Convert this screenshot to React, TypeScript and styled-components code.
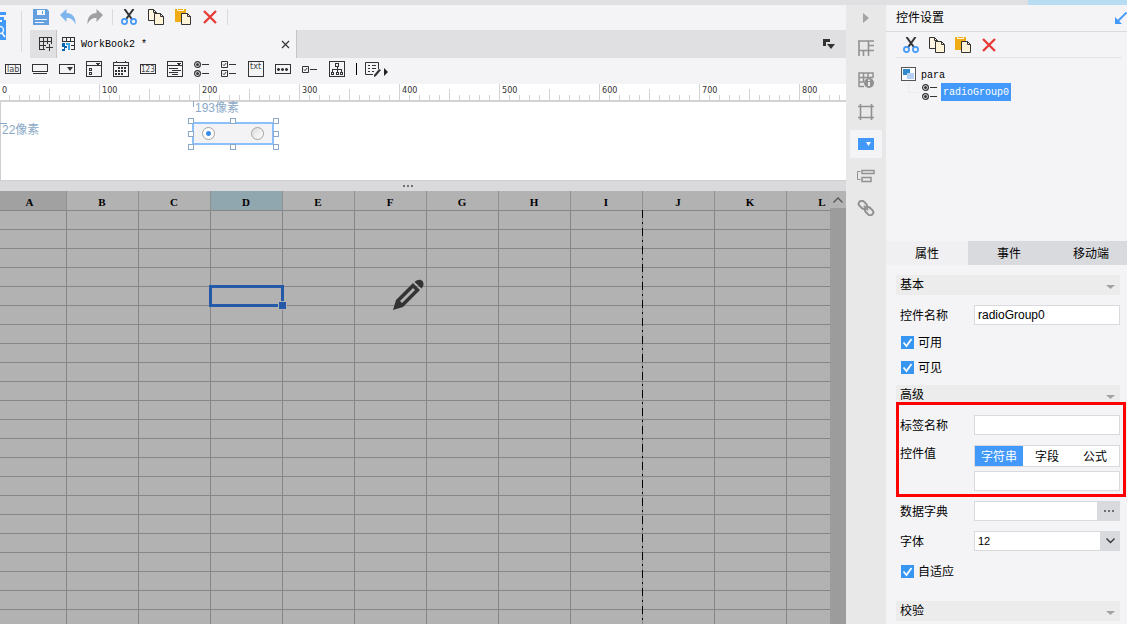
import React from "react";
import styled, { createGlobalStyle, css } from "styled-components";

const c = {
  bg: "#f4f4f7",
  bar: "#e0e0e2",
  rail: "#e8e8e8",
  line: "#d9dadd",
  blue: "#4299f9",
  ink: "#333333",
  mute: "#919191",
  guide: "#8aa9c6",
  cell: "#b2b2b2",
  cellLine: "#868686",
};

const GlobalStyle = createGlobalStyle`
  * { box-sizing: border-box; }
  body {
    margin: 0;
    background: ${c.bg};
    color: #000;
    font-family: "Liberation Sans", "Noto Sans CJK SC", sans-serif;
    font-size: 12px;
    line-height: 14px;
  }
  button, input, select { font: inherit; color: inherit; margin: 0; }
  button { border: 0; padding: 0; background: none; cursor: pointer; }
  svg { display: block; flex: none; }
`;

const Shell = styled.div`
  display: flex;
  flex-direction: column;
  height: 100vh;
  overflow: hidden;
`;

const TopStrip = styled.div`
  display: flex;
  justify-content: flex-end;
  flex: none;
  height: 5px;
  background: ${c.bar};
`;

const TopAccent = styled.div`
  width: 99px;
  background: #b8dcf2;
`;

const Columns = styled.div`
  display: flex;
  flex: 1;
  min-height: 0;
`;

const Designer = styled.main`
  display: flex;
  flex-direction: column;
  flex: 1;
  min-width: 0;
`;

const Head = styled.header`
  display: flex;
  flex: none;
`;

const LogoSlot = styled.div`
  display: flex;
  width: 30px;
  padding: 6px 8px 6px 0;
  justify-content: space-between;
`;

const LogoDivider = styled.div`
  width: 1px;
  background: ${c.line};
`;

const HeadMain = styled.div`
  flex: 1;
  min-width: 0;
`;

const Toolbar = styled.div`
  display: flex;
  align-items: center;
  gap: 11px;
  height: 25px;
  padding: 0 0 1px 3px;
`;

const ToolGroup = styled.div<{ $divided?: boolean }>`
  display: flex;
  align-items: center;
  gap: 11px;
  height: 16px;
  ${(p) =>
    p.$divided &&
    css`
      margin-left: -2px;
      padding: 0 9px 0 8px;
      border: solid ${c.line};
      border-width: 0 1px;
    `}
`;

const IconButton = styled.button`
  display: flex;
  width: 16px;
  height: 16px;
  align-items: center;
  justify-content: center;
  flex: none;
`;

const TabBar = styled.div`
  display: flex;
  height: 28px;
  background: ${c.bar};
`;

const NewTab = styled.button`
  display: flex;
  width: 26px;
  padding-left: 9px;
  align-items: center;
`;

const BookTab = styled.div`
  display: flex;
  align-items: center;
  gap: 5px;
  width: 241px;
  padding: 0 6px 0 5px;
  background: ${c.bg};
  border: solid #c4c4c6;
  border-width: 0 1px;
  font-family: "Liberation Mono", monospace;
  font-size: 10px;
`;

const BookName = styled.span`
  flex: 1;
  padding-top: 2px;
`;

const TabMenu = styled.button`
  display: flex;
  align-items: center;
  margin-left: auto;
  padding-right: 11px;
`;

const WidgetBar = styled.div`
  display: flex;
  flex: none;
  align-items: center;
  gap: 11px;
  height: 26px;
  padding: 0 0 4px 5px;
`;

const BarMark = styled.div`
  width: 1px;
  height: 12px;
  margin-right: -3px;
  background: #000;
`;

const MoreButton = styled(IconButton)`
  width: 25px;
`;

const Ruler = styled.div`
  display: flex;
  flex: none;
  height: 18px;
  overflow: hidden;
  background: #fff;
  border-bottom: 2px solid #d3d3d6;
`;

const RulerPart = styled.div`
  flex: 0 0 100px;
  padding-left: 2px;
  font-family: "DejaVu Sans Condensed", "DejaVu Sans", sans-serif;
  font-size: 9px;
  line-height: 13px;
  color: ${c.ink};
  background:
    linear-gradient(#d3d3d6, #d3d3d6) 99px 0 / 1px 100% no-repeat,
    linear-gradient(#d3d3d6, #d3d3d6) 49px 100% / 1px 11px no-repeat,
    repeating-linear-gradient(to right, transparent 0 9px, #d3d3d6 9px 10px) 0 100% / 100px 5px no-repeat;
`;

const Canvas = styled.section`
  position: relative;
  flex: none;
  height: 78px;
  background: #fff;
  border-left: 1px solid #cfcfd2;
`;

const GuideX = styled.span`
  position: absolute;
  left: 192px;
  top: -2px;
  padding-left: 2px;
  color: ${c.guide};
  line-height: 16px;
  &::before {
    content: "";
    position: absolute;
    left: 0;
    top: 1px;
    width: 1px;
    height: 6px;
    background: ${c.guide};
  }
`;

const GuideY = styled.span`
  position: absolute;
  left: -1px;
  top: 20px;
  padding-left: 2px;
  color: ${c.guide};
  line-height: 16px;
  &::before {
    content: "";
    position: absolute;
    left: 0;
    top: 1px;
    width: 7px;
    height: 1px;
    background: ${c.guide};
  }
`;

const PlacedWidget = styled.div`
  position: absolute;
  left: 191px;
  top: 20px;
  display: flex;
  align-items: center;
  justify-content: space-between;
  width: 82px;
  height: 23px;
  padding: 0 8px;
  background: #f3f3f5;
  border: 2px solid #8bc0f8;
`;

const Handle = styled.i<{ $x: number; $y: number }>`
  position: absolute;
  left: ${(p) => p.$x}px;
  top: ${(p) => p.$y}px;
  width: 6px;
  height: 6px;
  background: #fff;
  border: 1px solid ${c.guide};
`;

const Radio = styled.input`
  appearance: none;
  width: 13px;
  height: 13px;
  border: 1px solid #a3a3a3;
  border-radius: 50%;
  background: linear-gradient(135deg, #dcdcdc, #fff);
  &:checked {
    background: radial-gradient(circle, #3c8cec 0 2px, #fff 3px);
  }
`;

const Splitter = styled.div`
  display: flex;
  flex: none;
  align-items: center;
  justify-content: center;
  height: 11px;
  padding-right: 30px;
  background: #dadadc;
  border-top: 1px solid #cfcfd1;
`;

const SheetArea = styled.section`
  display: flex;
  flex: 1;
  min-height: 0;
  background: ${c.cell};
`;

const SheetView = styled.div`
  flex: 1;
  min-width: 0;
  overflow: hidden;
`;

const Sheet = styled.table`
  width: 859px;
  table-layout: fixed;
  border-collapse: separate;
  border-spacing: 0;
`;

const ColHead = styled.th<{ $tone?: string; $first?: boolean; $breakAfter?: boolean }>`
  position: relative;
  width: ${(p) => (p.$first ? 67 : 72)}px;
  height: 20px;
  padding: 2px ${(p) => (p.$first ? 7 : 1)}px 0 0;
  font-family: "Liberation Serif", serif;
  font-size: 11px;
  font-weight: 700;
  line-height: 14px;
  text-align: center;
  background: ${(p) => p.$tone ?? c.cell};
  border-right: 1px solid #909090;
  border-bottom: 1px solid ${c.cellLine};
  ${(p) =>
    p.$breakAfter &&
    css`
      &::after {
        content: "";
        position: absolute;
        z-index: 1;
        right: -1px;
        top: 19px;
        width: 1px;
        height: 100vh;
        background: repeating-linear-gradient(
          #000 0 8px, transparent 8px 12px, #000 12px 14px, transparent 14px 18px
        );
      }
    `}
`;

const Cell = styled.td`
  position: relative;
  height: 19px;
  padding: 0;
  border-right: 1px solid ${c.cellLine};
  border-bottom: 1px solid ${c.cellLine};
`;

const Selection = styled.div`
  position: absolute;
  z-index: 1;
  inset: -2px;
  border: 3px solid #245aa8;
  &::after {
    content: "";
    position: absolute;
    right: -6px;
    bottom: -6px;
    width: 7px;
    height: 7px;
    background: #245aa8;
    border: 1px solid ${c.cell};
  }
`;

const Pencil = styled.svg`
  position: absolute;
  z-index: 1;
  left: 38px;
  top: -8px;
`;

const ScrollTrack = styled.div`
  flex: none;
  width: 16px;
  background: #9c9c9c;
`;

const ScrollUp = styled.button`
  display: flex;
  align-items: center;
  justify-content: center;
  width: 16px;
  height: 17px;
  background: #b4b4b4;
`;

const Rail = styled.nav`
  display: flex;
  flex: none;
  flex-direction: column;
  align-items: center;
  gap: 4px;
  width: 40px;
  background: ${c.rail};
`;

const RailToggle = styled.button`
  display: flex;
  align-items: center;
  height: 25px;
`;

const RailButton = styled.button<{ $active?: boolean }>`
  display: flex;
  align-items: center;
  justify-content: center;
  width: 32px;
  height: 28px;
  background: ${(p) => (p.$active ? c.bg : "transparent")};
`;

const Panel = styled.aside`
  display: flex;
  flex: none;
  flex-direction: column;
  width: 241px;
  overflow: hidden;
`;

const PanelTitle = styled.div`
  display: flex;
  flex: none;
  align-items: center;
  justify-content: space-between;
  height: 27px;
  padding-left: 10px;
  border-bottom: 1px solid ${c.line};
`;

const PanelTools = styled.div`
  display: flex;
  flex: none;
  align-items: center;
  gap: 10px;
  height: 26px;
  margin: 0 5px 0 10px;
  padding-left: 7px;
  border-bottom: 1px solid #e5e5e8;
`;

const Tree = styled.ul`
  flex: none;
  height: 183px;
  margin: 0;
  padding: 7px 0 0 15px;
  list-style: none;
  font-family: "Liberation Mono", monospace;
  font-size: 10px;
  ul {
    display: flex;
    margin: 0;
    padding: 0 0 0 7px;
    list-style: none;
  }
  ul::before {
    content: "";
    width: 10px;
    height: 9px;
    margin-right: 3px;
    border: solid #ebebee;
    border-width: 0 0 1px 1px;
  }
`;

const TreeNode = styled.button<{ $selected?: boolean }>`
  display: flex;
  align-items: center;
  gap: 4px;
  height: 18px;
  span {
    padding: ${(p) => (p.$selected ? "3px 2px 1px" : "4px 1px 0")};
    line-height: 14px;
    color: ${(p) => (p.$selected ? "#fff" : "#000")};
    background: ${(p) => (p.$selected ? c.blue : "transparent")};
  }
`;

const PropTabs = styled.div`
  display: flex;
  flex: none;
  height: 24px;
`;

const PropTab = styled.button<{ $active?: boolean }>`
  flex: 0 0 82px;
  padding-top: 2px;
  background: ${(p) => (p.$active ? "#f0f0f2" : "#d9dade")};
`;

const Form = styled.form`
  display: flex;
  flex-direction: column;
  gap: 10px;
  padding: 10px 7px 0 10px;
`;

const SectionBar = styled.button`
  display: flex;
  align-items: center;
  justify-content: space-between;
  flex: none;
  height: 20px;
  padding: 0 5px 0 4px;
  background: #ececec;
`;

const ChevronSlot = styled.span`
  padding-top: 3px;
`;

const Field = styled.div`
  display: flex;
  align-items: center;
  padding-left: 4px;
`;

const FieldLabel = styled.label`
  flex: 0 0 74px;
  padding-top: 2px;
`;

const TopField = styled(Field)`
  align-items: flex-start;
`;

const TextInput = styled.input`
  flex: 1;
  min-width: 0;
  height: 20px;
  padding: 0 3px;
  background: #fff;
  border: 1px solid ${c.line};
  border-radius: 0;
  outline: 0;
`;

const Stack = styled.div`
  display: flex;
  flex: 1;
  flex-direction: column;
  gap: 4px;
  min-width: 0;
  ${TextInput} { flex: none; }
`;

const Segments = styled.div`
  display: flex;
  height: 22px;
  border: 1px solid ${c.line};
  background: #fff;
`;

const Segment = styled.button<{ $active?: boolean }>`
  flex: 1;
  padding-top: 2px;
  color: ${(p) => (p.$active ? "#fff" : "#000")};
  background: ${(p) => (p.$active ? c.blue : "#fff")};
`;

const Marked = styled.div`
  position: relative;
  display: flex;
  flex-direction: column;
  gap: 10px;
  &::after {
    content: "";
    position: absolute;
    inset: -13px -6px -6px 0;
    border: 3px solid #ff0000;
    pointer-events: none;
  }
`;

const CheckList = styled.div<{ $last?: boolean }>`
  margin: ${(p) => (p.$last ? "-2px 0 7px" : "-5px 0")};
`;

const CheckLabel = styled.label`
  display: flex;
  align-items: center;
  gap: 4px;
  height: 25px;
  padding-left: 5px;
`;

const CheckBoxWrap = styled.span`
  position: relative;
  display: flex;
  input {
    appearance: none;
    width: 13px;
    height: 13px;
    background: #3796f2;
  }
  svg {
    position: absolute;
    inset: 0;
    pointer-events: none;
  }
`;

const MoreInputButton = styled.button`
  display: flex;
  align-items: center;
  justify-content: center;
  width: 22px;
  height: 20px;
  background: ${c.line};
`;

const SelectWrap = styled.div`
  position: relative;
  display: flex;
  flex: 1;
  select {
    appearance: none;
    flex: 1;
    height: 20px;
    padding: 0 3px;
    font-size: 11px;
    border: 1px solid ${c.line};
    border-radius: 0;
    background: linear-gradient(to left, ${c.line} 19px, #fff 19px);
  }
  svg {
    position: absolute;
    right: 5px;
    top: 7px;
    pointer-events: none;
  }
`;

/* ---------- icons ---------- */

const Svg = ({ w = 16, h = 16, crisp = false, children }: any) => (
  <svg
    width={w}
    height={h}
    viewBox={`0 0 ${w} ${h}`}
    fill="none"
    stroke={c.ink}
    shapeRendering={crisp ? "crispEdges" : "auto"}
    aria-hidden="true"
  >
    {children}
  </svg>
);

const SaveIcon = () => (
  <Svg>
    <path d="M0 0h14l2 2v14H0z" fill="#649fe0" stroke="none" />
    <path d="M4 1h8v5H4zM2 10h12v1H2zM2 13h9v1H2z" fill="#f4f8fd" stroke="none" />
    <path d="M9 2h1v3H9z" fill="#649fe0" stroke="none" />
  </Svg>
);

const UndoIcon = () => (
  <Svg>
    <path d="M0 6 6.500 0v4C12 4 16 8 15.500 15.500 13.500 10.500 11 9 6.500 9v4z" fill="#7fb5ee" stroke="none" />
  </Svg>
);

const RedoIcon = () => (
  <Svg>
    <path d="M16 6 9.500 0v4C4 4 0 8 .5 15.500 2.500 10.500 5 9 9.500 9v4z" fill="#a0a0a0" stroke="none" />
  </Svg>
);

const CutIcon = () => (
  <Svg>
    <path d="M3.500 0 11.500 11M12.500 0 4.500 11" strokeWidth="2" />
    <circle cx="3.500" cy="12.500" r="2.600" stroke={c.blue} strokeWidth="1.700" />
    <circle cx="12.500" cy="12.500" r="2.600" stroke={c.blue} strokeWidth="1.700" />
  </Svg>
);

const CopyIcon = () => (
  <Svg>
    <path d="M.5.5h5l3 3v8h-8z" fill="#fff7e2" />
    <path d="M5.500.5v3h3" />
    <path d="M6.500 4.500h6l3 3v8h-9z" fill="#fff3d8" />
    <path d="M12.500 4.500v3h3" />
  </Svg>
);

const PasteIcon = () => (
  <Svg>
    <path d="M0 0h11v13H0z" fill="#f0ac14" stroke="none" />
    <path d="M2.500 0v1.500h6V0" stroke="#fff7e2" />
    <path d="M6.500 4.500h6l3 3v8h-9z" fill="#fff3d8" />
    <path d="M12.500 4.500v3h3" />
  </Svg>
);

const DeleteIcon = () => (
  <Svg>
    <path d="M2 2 14 14M14 2 2 14" stroke="#e63a34" strokeWidth="2.300" />
  </Svg>
);

const LogoIcon = () => (
  <Svg w={7} h={29}>
    <path d="M0 1h6v3H0zM0 6h4v3h2v20H0z" fill={c.blue} stroke="none" />
    <path d="M0 9h2v2H0z" fill="#eef5fd" stroke="none" />
    <circle cx="0" cy="19" r="3.500" stroke="#e8f2fd" strokeWidth="1.500" />
    <path d="M2 22l3 4" stroke="#fff" strokeWidth="1.500" />
  </Svg>
);

const NewSheetIcon = () => (
  <Svg w={14} h={14} crisp>
    <path d="M.5 12V1M0 .5h13M12.500 1v6M0 4.500h13M0 8.500h7M4.500 1v11M8.500 1v6M0 12.500h6M10.500 7v7M7 10.500h7" />
  </Svg>
);

const BookIcon = () => (
  <Svg w={14} h={14} crisp>
    <path d="M.5 5V.5h12v12H9M0 4.500h13M4.500 0v5M8.500 0v5M9 8.500h4" />
    <path d="M0 6h3v3h2v2H3v3H0v-2h2v-2H0z" fill="#0a63b0" stroke="none" />
    <path d="M4 6h4v7H6V8H4z" fill="#3aa5e6" stroke="none" />
  </Svg>
);

const TabMenuIcon = () => (
  <Svg w={12} h={10}>
    <path d="M0 0h7v3H3v4H0zM4 5h8l-4 5z" fill={c.ink} stroke="none" />
  </Svg>
);

const tinyText = {
  fill: "#444",
  stroke: "none",
  fontFamily: "DejaVu Sans Condensed, DejaVu Sans, sans-serif",
};

const radioGlyph = (
  <>
    <circle cx="3.500" cy="3.500" r="2.900" strokeWidth="1.200" />
    <circle cx="3.500" cy="3.500" r="1.500" fill={c.ink} stroke="none" />
    <circle cx="3.500" cy="12.500" r="2.900" strokeWidth="1.200" />
    <circle cx="3.500" cy="12.500" r="1.500" fill={c.ink} stroke="none" />
    <path d="M8 3.500h7M8 12.500h7" />
  </>
);

const RadioGroupIcon = () => <Svg>{radioGlyph}</Svg>;

const widgets: { name: string; icon: React.ReactNode }[] = [
  {
    name: "标签控件",
    icon: (
      <Svg>
        <rect x=".5" y="3.500" width="15" height="9" />
        <text x="2" y="11" fontSize="9" {...tinyText}>lab</text>
      </Svg>
    ),
  },
  {
    name: "按钮控件",
    icon: (
      <Svg crisp>
        <path d="M.5 3.500h15v7H.5zM1 12.500h14" />
      </Svg>
    ),
  },
  {
    name: "下拉框控件",
    icon: (
      <Svg>
        <rect x=".5" y="3.500" width="15" height="9" />
        <path d="M8 6h6l-3 4z" fill={c.ink} stroke="none" />
      </Svg>
    ),
  },
  {
    name: "下拉复选框控件",
    icon: (
      <Svg crisp>
        <path d="M.5.5h15v15H.5zM0 4.500h16M3.500 7.500h2v2h-2zM3.500 11.500h2v2h-2z" />
        <path d="M10 2h4v1h-1v1h-2V3h-1z" fill={c.ink} stroke="none" />
      </Svg>
    ),
  },
  {
    name: "日期控件",
    icon: (
      <Svg crisp>
        <path d="M.5 1.500h15v14H.5zM0 4.500h16M3.500 0v2M12.500 0v2" />
        <path d="M5 7h9M2 10h12M2 13h9" strokeWidth="2" strokeDasharray="2 1" />
      </Svg>
    ),
  },
  {
    name: "数字控件",
    icon: (
      <Svg>
        <rect x=".5" y="3.500" width="15" height="9" />
        <text x="1" y="11" fontSize="8" {...tinyText}>123</text>
      </Svg>
    ),
  },
  {
    name: "列表控件",
    icon: (
      <Svg crisp>
        <path d="M.5.5h15v15H.5zM0 4.500h16M2 7.500h9M5 9.500h9M2 11.500h9M5 13.500h6" />
        <path d="M10 2h4v1h-1v1h-2V3h-1z" fill={c.ink} stroke="none" />
      </Svg>
    ),
  },
  { name: "单选按钮组控件", icon: <RadioGroupIcon /> },
  {
    name: "复选框组控件",
    icon: (
      <Svg>
        <path d="M.5.5h6v6h-6zM.5 9.500h6v6h-6zM8 3.500h7M8 12.500h7" />
        <path d="M2 3.500 3 4.700 5.200 2M2 12.500l1 1.200L5.200 11" />
      </Svg>
    ),
  },
  {
    name: "文本控件",
    icon: (
      <Svg>
        <rect x=".5" y=".5" width="15" height="15" />
        <text x="2" y="8" fontSize="9" {...tinyText}>txt</text>
      </Svg>
    ),
  },
  {
    name: "密码控件",
    icon: (
      <Svg crisp>
        <path d="M.5 3.500h15v9H.5z" />
        <path d="M2 8.500h12" strokeWidth="3" strokeDasharray="3 1" stroke="#9a9a9a" />
        <path d="M2 8.500h3M6 8.500h3M10 8.500h3M3.500 7v3M7.500 7v3M11.500 7v3" />
      </Svg>
    ),
  },
  {
    name: "复选框控件",
    icon: (
      <Svg>
        <path d="M.5 5.500h6v6h-6zM8 8.500h7M2 8.500l1 1.200L5.200 7" />
      </Svg>
    ),
  },
  {
    name: "树控件",
    icon: (
      <Svg crisp>
        <path d="M.5.5h15v15H.5zM6.500 2.500h3v3h-3zM8 6v3M3.500 11V8.500h9V11M8.500 8v3M2.500 11.500h2v2h-2zM7.500 11.500h2v2h-2zM11.500 11.500h2v2h-2z" />
      </Svg>
    ),
  },
];

const Chevron = () => (
  <Svg w={9} h={4}>
    <path d="M0 0h9L4.500 4z" fill="#a3a3a3" stroke="none" />
  </Svg>
);

const railIcons: { name: string; active?: boolean; icon: React.ReactNode }[] = [
  {
    name: "单元格元素",
    icon: (
      <path d="M0 1h16M1 1v15M1 10.500h15M5.500 10v6M10.500 1v15M10.500 5.500H16" strokeWidth="1.600" />
    ),
  },
  {
    name: "单元格属性",
    icon: (
      <g>
        <path d="M1 15V1h14v5M1 5.500h14M1 10h5M5.500 1v9M10 1v5M1 14.500h5" strokeWidth="1.500" />
        <circle cx="11" cy="11" r="5" fill={c.mute} stroke="none" />
        <path d="M11 7.500v1.500M11 10v4" stroke="#fff" strokeWidth="1.600" />
      </g>
    ),
  },
  {
    name: "悬浮元素",
    icon: <path d="M2.500 0v16M13.500 0v16M0 2.500h16M0 13.500h16" strokeWidth="1.600" />,
  },
  {
    name: "控件设置",
    active: true,
    icon: (
      <g stroke="none">
        <path d="M0 2h16v12H0z" fill={c.blue} />
        <path d="M8 6h5l-2.500 4z" fill="#fff" />
      </g>
    ),
  },
  {
    name: "条件属性",
    icon: (
      <g strokeWidth="1.500">
        <path d="M2.500 3.500h-3v8h3" strokeWidth="1" />
        <path d="M4 2.500h12v3H4zM4 9.500h9v4H4z" />
      </g>
    ),
  },
  {
    name: "超级链接",
    icon: (
      <g transform="rotate(45 8 8)" strokeWidth="2">
        <rect x="-1" y="5" width="9" height="6" rx="3" />
        <rect x="8" y="5" width="9" height="6" rx="3" />
        <path d="M5 8h6" />
      </g>
    ),
  },
];

/* ---------- parts ---------- */

const columnNames = "ABCDEFGHIJKL".split("");
const rowIndexes = Array.from({ length: 22 }, (_, i) => i);
const handlePoints = [
  [-6, -6], [36, -6], [79, -6],
  [-6, 7], [79, 7],
  [-6, 20], [36, 20], [79, 20],
];

const EditTools = () => (
  <>
    <IconButton aria-label="剪切"><CutIcon /></IconButton>
    <IconButton aria-label="复制"><CopyIcon /></IconButton>
    <IconButton aria-label="粘贴"><PasteIcon /></IconButton>
    <IconButton aria-label="删除"><DeleteIcon /></IconButton>
  </>
);

const Section = ({ title }: { title: string }) => (
  <SectionBar type="button">
    {title}
    <ChevronSlot><Chevron /></ChevronSlot>
  </SectionBar>
);

const Check = ({ text }: { text: string }) => (
  <CheckLabel>
    <CheckBoxWrap>
      <input type="checkbox" defaultChecked />
      <Svg w={13} h={13}>
        <path d="M2.500 6.500 5.500 10 10.500 3" stroke="#fff" strokeWidth="1.800" />
      </Svg>
    </CheckBoxWrap>
    {text}
  </CheckLabel>
);

const toneOf = (name: string) =>
  name === "A" ? "#a1a1a1" : name === "D" ? "#90a7af" : undefined;

export default function App() {
  return (
    <Shell>
      <GlobalStyle />
      <TopStrip><TopAccent /></TopStrip>
      <Columns>
        <Designer>
          <Head>
            <LogoSlot>
              <LogoIcon />
              <LogoDivider />
            </LogoSlot>
            <HeadMain>
              <Toolbar>
                <ToolGroup>
                  <IconButton aria-label="保存"><SaveIcon /></IconButton>
                  <IconButton aria-label="撤销"><UndoIcon /></IconButton>
                  <IconButton aria-label="重做"><RedoIcon /></IconButton>
                </ToolGroup>
                <ToolGroup $divided><EditTools /></ToolGroup>
              </Toolbar>
              <TabBar>
                <NewTab aria-label="新建"><NewSheetIcon /></NewTab>
                <BookTab>
                  <BookIcon />
                  <BookName>WorkBook2 *</BookName>
                  <button aria-label="关闭">
                    <Svg w={9} h={9}><path d="M1 1l7 7M8 1 1 8" strokeWidth="1.200" /></Svg>
                  </button>
                </BookTab>
                <TabMenu aria-label="更多标签"><TabMenuIcon /></TabMenu>
              </TabBar>
            </HeadMain>
          </Head>

          <WidgetBar>
            {widgets.map((w) => (
              <IconButton key={w.name} aria-label={w.name}>{w.icon}</IconButton>
            ))}
            <BarMark />
            <MoreButton aria-label="更多控件">
              <Svg w={25}>
                <path d="M8 13.500H.5V1.500h13V8M3 4.500h2M3 7.500h2M3 10.500h2M7 4.500h4M7 7.500h4M7 10.500h2" />
                <path d="M9 14l5-6 2 1-5 6-2 1z" fill={c.ink} stroke="none" />
                <path d="M19 7l4 4-4 4z" fill="#222" stroke="none" />
              </Svg>
            </MoreButton>
          </WidgetBar>

          <Ruler>
            {[0, 100, 200, 300, 400, 500, 600, 700, 800].map((n) => (
              <RulerPart key={n}>{n}</RulerPart>
            ))}
          </Ruler>

          <Canvas>
            <GuideX>193像素</GuideX>
            <GuideY>22像素</GuideY>
            <PlacedWidget>
              <Radio type="radio" name="preview" aria-label="选项一" defaultChecked />
              <Radio type="radio" name="preview" aria-label="选项二" />
              {handlePoints.map(([x, y]) => (
                <Handle key={`${x}:${y}`} $x={x} $y={y} />
              ))}
            </PlacedWidget>
          </Canvas>

          <Splitter>
            <Svg w={10} h={2} crisp>
              <path d="M0 1h10" strokeWidth="2" strokeDasharray="2 2" stroke="#707070" />
            </Svg>
          </Splitter>

          <SheetArea>
            <SheetView>
              <Sheet>
                <thead>
                  <tr>
                    {columnNames.map((n) => (
                      <ColHead key={n} $tone={toneOf(n)} $first={n === "A"} $breakAfter={n === "I"}>
                        {n}
                      </ColHead>
                    ))}
                  </tr>
                </thead>
                <tbody>
                  {rowIndexes.map((r) => (
                    <tr key={r}>
                      {columnNames.map((n) => (
                        <Cell key={n}>
                          {r === 4 && n === "D" && <Selection />}
                          {r === 4 && n === "F" && (
                            <Pencil width="31" height="32" viewBox="0 0 31 32" aria-hidden="true">
                              <path
                                d="M0 31 3 21 20 4 27 11 10 28z M7 22 20 9 22 11 9 24z"
                                fill={c.ink}
                                fillRule="evenodd"
                              />
                              <path d="M21.500 3C25-.5 28 .5 29.500 2 31 4 31 7 28.500 9.500z" fill={c.ink} />
                            </Pencil>
                          )}
                        </Cell>
                      ))}
                    </tr>
                  ))}
                </tbody>
              </Sheet>
            </SheetView>
            <ScrollTrack>
              <ScrollUp aria-label="向上滚动">
                <Svg w={10} h={6}><path d="M.5 5.500 5 1l4.500 4.500" stroke="#555" strokeWidth="1.300" /></Svg>
              </ScrollUp>
            </ScrollTrack>
          </SheetArea>
        </Designer>

        <Rail>
          <RailToggle aria-label="折叠面板">
            <Svg w={6} h={10}><path d="M0 0l6 5-6 5z" fill="#a3a3a3" stroke="none" /></Svg>
          </RailToggle>
          {railIcons.map((r) => (
            <RailButton key={r.name} aria-label={r.name} $active={r.active}>
              <svg width="18" height="16" viewBox="-1 0 18 16" fill="none" stroke={c.mute} aria-hidden="true">
                {r.icon}
              </svg>
            </RailButton>
          ))}
        </Rail>

        <Panel>
          <PanelTitle>
            控件设置
            <Svg w={12} h={12}>
              <path d="M11.500.5 3 9" stroke={c.blue} strokeWidth="1.800" />
              <path d="M0 5v7h7z" fill={c.blue} stroke="none" />
            </Svg>
          </PanelTitle>
          <PanelTools><EditTools /></PanelTools>
          <Tree>
            <li>
              <TreeNode>
                <Svg w={15} h={14} crisp>
                  <path d="M.5.5h14v13H.5z" fill="#fff" stroke="#555" />
                  <path d="M2 2h7v6H2z" fill="#2f8bcb" stroke="none" />
                  <path d="M6 6h7v6H6z" fill="#b5d0f5" stroke="none" />
                </Svg>
                <span>para</span>
              </TreeNode>
              <ul>
                <li>
                  <TreeNode $selected>
                    <Svg w={15} h={16}>{radioGlyph}</Svg>
                    <span>radioGroup0</span>
                  </TreeNode>
                </li>
              </ul>
            </li>
          </Tree>

          <PropTabs role="tablist">
            <PropTab role="tab" aria-selected $active>属性</PropTab>
            <PropTab role="tab">事件</PropTab>
            <PropTab role="tab">移动端</PropTab>
          </PropTabs>

          <Form>
            <Section title="基本" />
            <Field>
              <FieldLabel htmlFor="name">控件名称</FieldLabel>
              <TextInput id="name" defaultValue="radioGroup0" />
            </Field>
            <CheckList>
              <Check text="可用" />
              <Check text="可见" />
            </CheckList>
            <Section title="高级" />
            <Marked>
              <Field>
                <FieldLabel htmlFor="label">标签名称</FieldLabel>
                <TextInput id="label" />
              </Field>
              <TopField>
                <FieldLabel htmlFor="value">控件值</FieldLabel>
                <Stack>
                  <Segments>
                    <Segment type="button" $active>字符串</Segment>
                    <Segment type="button">字段</Segment>
                    <Segment type="button">公式</Segment>
                  </Segments>
                  <TextInput id="value" />
                </Stack>
              </TopField>
            </Marked>
            <Field>
              <FieldLabel htmlFor="dict">数据字典</FieldLabel>
              <TextInput id="dict" />
              <MoreInputButton type="button" aria-label="选择数据字典">
                <Svg w={10} h={2} crisp>
                  <path d="M0 1h10" strokeWidth="2" strokeDasharray="2 2" stroke="#707070" />
                </Svg>
              </MoreInputButton>
            </Field>
            <Field>
              <FieldLabel htmlFor="font">字体</FieldLabel>
              <SelectWrap>
                <select id="font" defaultValue="12">
                  <option>12</option>
                </select>
                <Svg w={9} h={6}><path d="M.5.5l4 4 4-4" strokeWidth="1.300" /></Svg>
              </SelectWrap>
            </Field>
            <CheckList $last>
              <Check text="自适应" />
            </CheckList>
            <Section title="校验" />
          </Form>
        </Panel>
      </Columns>
    </Shell>
  );
}
